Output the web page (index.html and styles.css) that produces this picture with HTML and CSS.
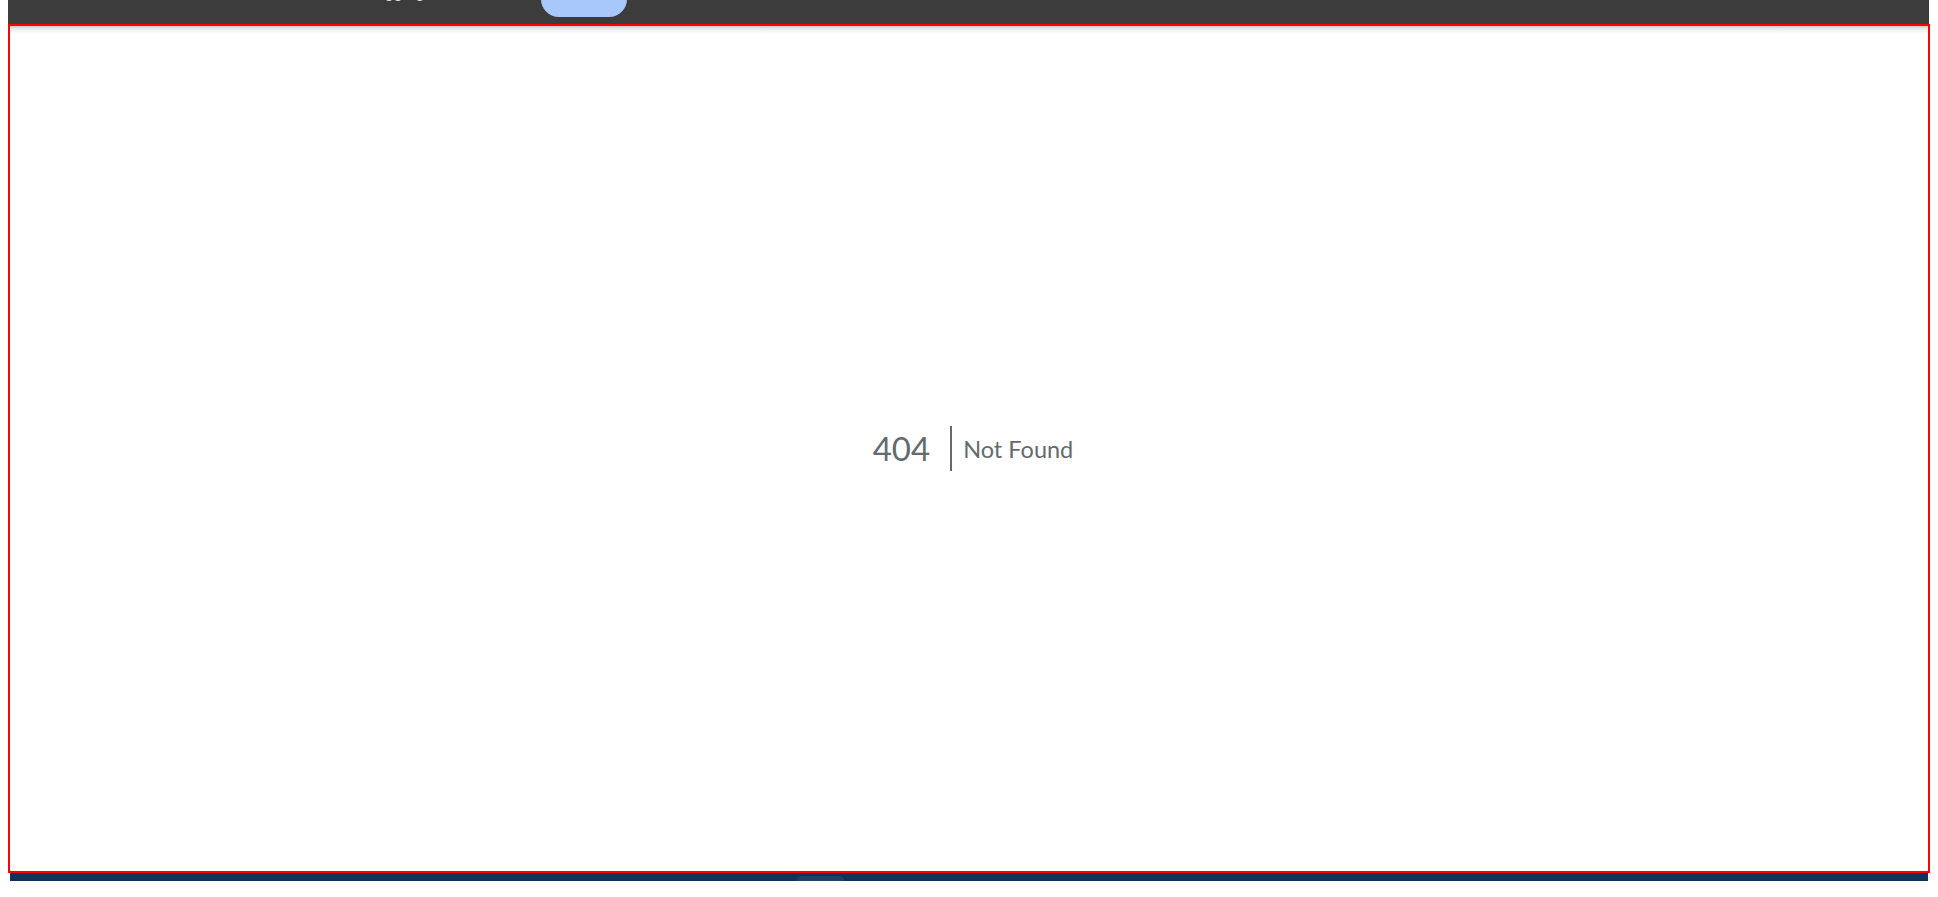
FILE: index.html
```html
<!DOCTYPE html>
<html lang="en">
<head>
<meta charset="utf-8">
<title>Not Found</title>
<link rel="stylesheet" href="styles.css">
</head>
<body>
<div class="topbar">
  <div class="topbar-inner">
    <span class="tb-title">Debugging</span>
    <span class="tb-pill"></span>
  </div>
</div>
<main class="frame">
  <div class="error">
    <div class="code">404</div>
    <div class="message">Not Found</div>
  </div>
</main>
<footer class="footbar">
  <span class="foot-tab"></span>
</footer>
</body>
</html>
```
FILE: styles.css
```css
html, body {
  margin: 0;
  padding: 0;
  background: #ffffff;
  overflow: hidden;
}

.topbar {
  margin: 0 9px 0 8px;
  height: 24px;
  background: #3c3c3c;
  overflow: hidden;
}

.topbar-inner {
  display: flex;
  align-items: flex-start;
  margin-top: -20px;
  padding-left: 340px;
}

.tb-title {
  width: 193px;
  margin-top: 3px;
  font-family: Roboto, "Liberation Sans", sans-serif;
  font-size: 16px;
  line-height: 20px;
  color: #e3e3e3;
  white-space: nowrap;
}

.tb-pill {
  width: 86px;
  height: 37px;
  border-radius: 18px;
  background: #a8c7fa;
}

.frame {
  margin: 0 8px;
  height: 845px;
  border: 2px solid #ff0000;
  background: linear-gradient(to bottom, #c9c9c9 0, #ececec 3px, #ffffff 8px);
  display: flex;
  align-items: center;
  justify-content: center;
}

.error {
  display: flex;
  align-items: center;
  color: #636b6f;
  font-family: Lato, "Open Sans", sans-serif;
  font-weight: 400;
}

.code {
  font-size: 33px;
  line-height: 45px;
  padding: 0 19.5px 0 8px;
  border-right: 2px solid #636b6f;
}

.message {
  font-size: 23.5px;
  line-height: 30px;
  padding: 0 0 0 11.5px;
}

.footbar {
  margin: 0 10px;
  height: 8px;
  background: #14315e;
  display: flex;
  align-items: flex-end;
  padding-left: 787px;
}

.foot-tab {
  width: 47px;
  height: 5px;
  border-radius: 4px 4px 0 0;
  background: #213e69;
}
```
